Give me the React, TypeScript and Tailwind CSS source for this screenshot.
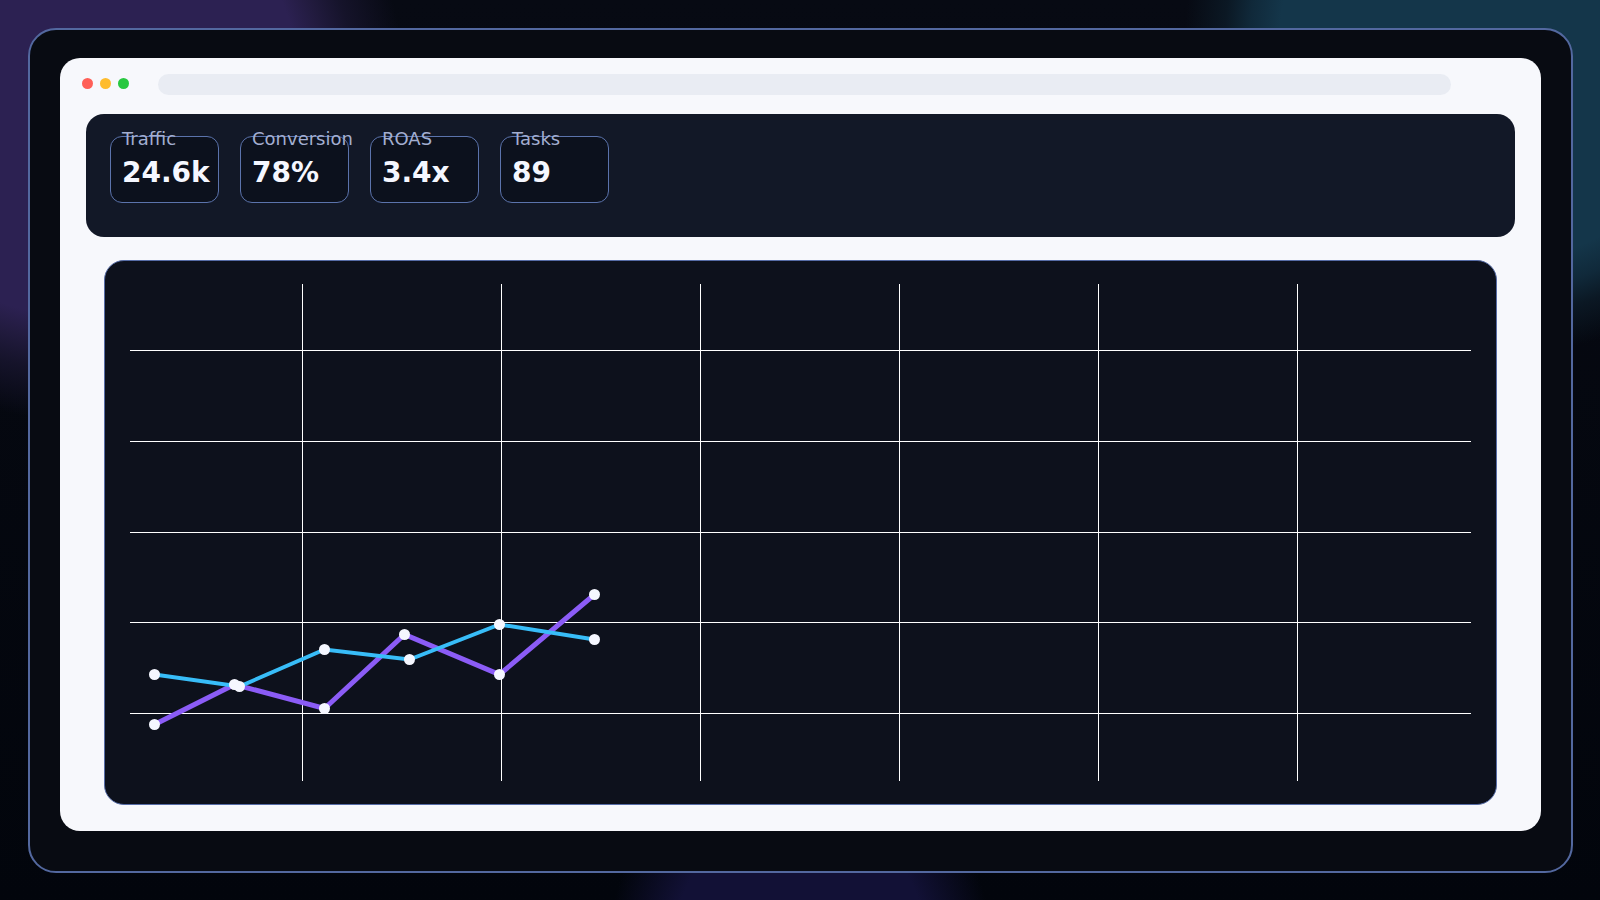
const stats = [
  { label: "Traffic", value: "24.6k" },
  { label: "Conversion", value: "78%" },
  { label: "ROAS", value: "3.4x" },
  { label: "Tasks", value: "89" },
];

const series = [
  {
    name: "purple",
    color: "#8b5cf6",
    width: 5,
    points: [[50, 464], [130, 424], [220, 448], [300, 374], [395, 414], [490, 334]],
  },
  {
    name: "blue",
    color: "#38bdf8",
    width: 4,
    points: [[50, 414], [135, 426], [220, 389], [305, 399], [395, 364], [490, 379]],
  },
];

const columns = [198, 397, 596, 795, 994, 1193];
const rows = [90, 181, 272, 362, 453];

function WindowBar() {
  return (
    <div className="flex items-start pt-4 pl-[22px] pr-[90px]">
      <div className="flex gap-[7px] pt-1">
        <span className="size-[11px] rounded-full bg-[#ff5f57]" />
        <span className="size-[11px] rounded-full bg-[#febc2e]" />
        <span className="size-[11px] rounded-full bg-[#28c840]" />
      </div>
      <div className="ml-[29px] h-[21px] flex-1 rounded-full bg-[#e9ecf3]" />
    </div>
  );
}

function StatCard({ label, value }: { label: string; value: string }) {
  return (
    <div className="h-[67px] w-[109px] rounded-xl border border-[#5b73ac] bg-[#0c111d] pl-[11px] whitespace-nowrap">
      <p className="-mt-2 text-[18px] leading-5 text-[#a3aed0]">{label}</p>
      <p className="mt-2 text-[28px] leading-8 font-bold text-[#f5f7ff]">{value}</p>
    </div>
  );
}

function Chart() {
  return (
    <div className="mx-11 mt-[23px] mb-[26px] flex-1 overflow-hidden rounded-[20px] border border-[#566ca6] bg-[#0d111c]">
      <svg
        className="block w-full"
        viewBox="1 1 1391 543"
        role="img"
        aria-label="Performance chart"
      >
        <g stroke="#ffffff" strokeWidth="1" shapeRendering="crispEdges">
          {rows.map((y) => (
            <line key={y} x1="26" x2="1367" y1={y + 0.5} y2={y + 0.5} />
          ))}
          {columns.map((x) => (
            <line key={x} x1={x + 0.5} x2={x + 0.5} y1="24" y2="521" />
          ))}
        </g>
        {series.map((s) => (
          <polyline
            key={s.name}
            points={s.points.map(([x, y]) => `${x + 0.5},${y + 0.5}`).join(" ")}
            fill="none"
            stroke={s.color}
            strokeWidth={s.width}
          />
        ))}
        {series.map((s) =>
          s.points.map(([x, y]) => (
            <circle key={`${s.name}-${x}`} cx={x + 0.5} cy={y + 0.5} r="5.5" fill="#f5f7ff" />
          ))
        )}
      </svg>
    </div>
  );
}

export default function App() {
  return (
    <main className="flex min-h-screen flex-col bg-[radial-gradient(circle_at_75px_90px,#2c2152_225px,#221b3f_250px,#15132a_280px,#0a0d1900_330px),radial-gradient(circle_at_calc(100%-100px)_40px,#14364a_220px,#10293a_250px,#0b1824_275px,#070c1600_315px),radial-gradient(circle_at_50%_calc(100%+40px),#121136_125px,#12113600_190px),linear-gradient(#070a13,#02050c)] pt-7 pr-[27px] pb-[27px] pl-7 font-['DejaVu_Sans',sans-serif]">
      <div className="flex flex-1 flex-col rounded-[28px] border-2 border-[#53689f] bg-[#080b12] px-[30px] pt-7 pb-10">
        <div className="flex flex-1 flex-col rounded-[20px] bg-[#f7f8fc]">
          <WindowBar />
          <section className="mx-[26px] mt-[19px] flex h-[123px] gap-[21px] rounded-[18px] bg-[#121827] px-6 pt-[22px]">
            {stats.map((s) => (
              <StatCard key={s.label} label={s.label} value={s.value} />
            ))}
          </section>
          <Chart />
        </div>
      </div>
    </main>
  );
}
